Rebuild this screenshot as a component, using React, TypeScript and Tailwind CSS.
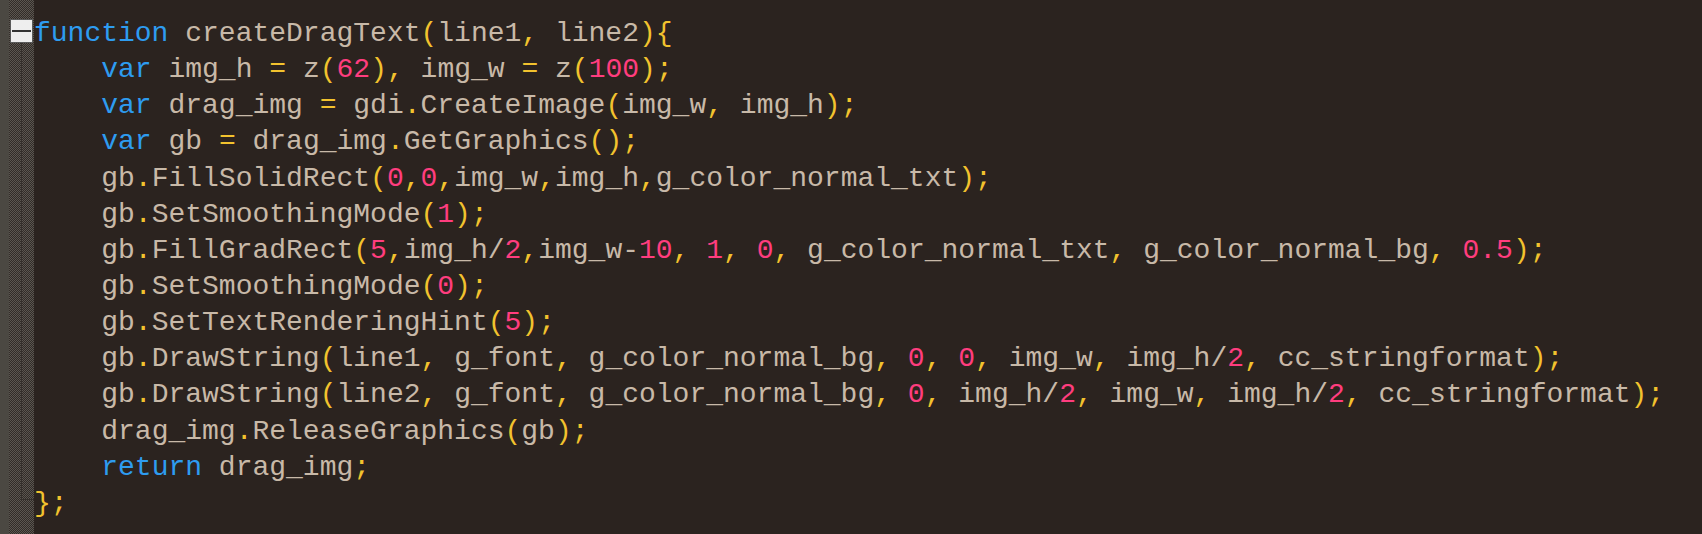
import React from "react";

const lines = [
  "function createDragText(line1, line2){",
  "    var img_h = z(62), img_w = z(100);",
  "    var drag_img = gdi.CreateImage(img_w, img_h);",
  "    var gb = drag_img.GetGraphics();",
  "    gb.FillSolidRect(0,0,img_w,img_h,g_color_normal_txt);",
  "    gb.SetSmoothingMode(1);",
  "    gb.FillGradRect(5,img_h/2,img_w-10, 1, 0, g_color_normal_txt, g_color_normal_bg, 0.5);",
  "    gb.SetSmoothingMode(0);",
  "    gb.SetTextRenderingHint(5);",
  "    gb.DrawString(line1, g_font, g_color_normal_bg, 0, 0, img_w, img_h/2, cc_stringformat);",
  "    gb.DrawString(line2, g_font, g_color_normal_bg, 0, img_h/2, img_w, img_h/2, cc_stringformat);",
  "    drag_img.ReleaseGraphics(gb);",
  "    return drag_img;",
  "};",
];

const KW = new Set(["function", "var", "return"]);

type Tok = { t: string; c: string };

function tokenize(s: string): Tok[] {
  const out: Tok[] = [];
  const re = /([A-Za-z_$][\w$]*)|(\d+(?:\.\d+)?)|(\s+)|([(){};,.=])|(.)/g;
  let m: RegExpExecArray | null;
  while ((m = re.exec(s))) {
    if (m[1]) out.push({ t: m[1], c: KW.has(m[1]) ? "kw" : "id" });
    else if (m[2]) out.push({ t: m[2], c: "num" });
    else if (m[3]) out.push({ t: m[3], c: "ws" });
    else if (m[4]) out.push({ t: m[4], c: "p" });
    else out.push({ t: m[5], c: "id" });
  }
  return out;
}

const cls: Record<string, string> = {
  kw: "text-[#2e9cf0]",
  id: "text-[#c8b9a8]",
  num: "text-[#ff3d7e]",
  p: "text-[#f2c22e]",
  ws: "",
};

export default function App() {
  return (
    <div className="flex h-[534px] w-full bg-[#2b231f] overflow-hidden">
      <div className="relative flex w-[34px] shrink-0">
        <div className="w-[9px] bg-[#4b4842]" />
        <div className="flex-1 bg-[repeating-conic-gradient(#5b5650_0_25%,#322c28_0_50%)] bg-[length:2px_2px]" />
        <div className="absolute left-[21px] top-[43px] h-[457px] w-px bg-[#35302c]" />
        <div className="absolute left-[21px] top-[499px] h-px w-[13px] bg-[#35302c]" />
        <div className="absolute left-[10px] top-[19px] flex h-[24px] w-[23px] items-center justify-center border border-[#5a5a5a] bg-[#eeeeee]">
          <div className="h-[2px] w-[19px] bg-[#333333]" />
        </div>
      </div>
      <div
        className="pt-[16px] whitespace-pre text-[28px] leading-[36.15px]"
        style={{ fontFamily: '"Liberation Mono", monospace' }}
      >
        {lines.map((l, i) => (
          <div key={i} className="h-[36.15px]">
            {tokenize(l).map((tk, j) => (
              <span key={j} className={cls[tk.c]}>
                {tk.t}
              </span>
            ))}
          </div>
        ))}
      </div>
    </div>
  );
}
